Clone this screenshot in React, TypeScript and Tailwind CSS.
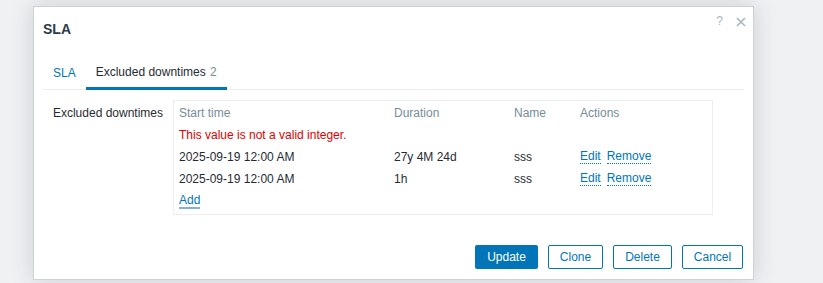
const rows = [
  { start: "2025-09-19 12:00 AM", duration: "27y 4M 24d", name: "sss" },
  { start: "2025-09-19 12:00 AM", duration: "1h", name: "sss" },
];

function LinkBtn({ children }: { children: React.ReactNode }) {
  return (
    <span className="text-[#0275b8] border-b border-dotted border-[#0275b8] leading-[13px] cursor-pointer">
      {children}
    </span>
  );
}

export default function App() {
  return (
    <div
      className="w-[823px] h-[283px] bg-[#f0f1f3] pt-[6px] pl-[33px] overflow-hidden text-[12px] text-[#1f2c33]"
      style={{ fontFamily: '"Liberation Sans", Arial, sans-serif' }}
    >
      <div className="w-[721px] h-[274px] bg-white border border-[#ccd3d7] shadow-[0_0_22px_rgba(40,50,60,0.18)] flex flex-col">
        {/* header */}
        <div className="flex items-start justify-between pl-[9px] pr-[7px] pt-[7px] h-[48px]">
          <h1 className="text-[14px] font-bold text-[#2d3c47] mt-[5px]">SLA</h1>
          <div className="flex items-center gap-[13px] text-[#a9b6bd] pt-[1px]">
            <span className="text-[12px] leading-none">?</span>
            <svg width="10" height="10" viewBox="0 0 10 10" className="mt-[1px]">
              <path d="M1 1 L9 9 M9 1 L1 9" stroke="#a9b6bd" strokeWidth="1.6" />
            </svg>
          </div>
        </div>

        {/* tabs */}
        <div className="mx-[9px] border-b border-[#ebeef0] flex h-[35px] items-end">
          <div className="px-[10px] pb-[7px] text-[#0275b8] text-[12px]">SLA</div>
          <div className="px-[10px] pb-[6px] border-b-[3px] border-[#0275b8] mb-[-1px] text-[12px]">
            Excluded downtimes <span className="text-[#768d99] ml-[1px]">2</span>
          </div>
        </div>

        {/* form */}
        <div className="flex pt-[10px] pl-[9px]">
          <div className="w-[130px] text-right pr-[10px] pt-[4px]">Excluded downtimes</div>
          <div className="w-[540px] h-[115px] border border-[#ebeef0] px-[5px] pt-[3px]">
            <div className="grid grid-cols-[215px_120px_66px_1fr] h-[18px] items-center text-[#768d99]">
              <span>Start time</span>
              <span>Duration</span>
              <span>Name</span>
              <span>Actions</span>
            </div>
            <div className="h-[24px] flex items-center text-[#e00000] pt-[1px]">
              This value is not a valid integer.
            </div>
            {rows.map((r, i) => (
              <div key={i} className="grid grid-cols-[215px_120px_66px_1fr] h-[22px] items-center">
                <span>{r.start}</span>
                <span>{r.duration}</span>
                <span>{r.name}</span>
                <span className="flex gap-[6px]">
                  <LinkBtn>Edit</LinkBtn>
                  <LinkBtn>Remove</LinkBtn>
                </span>
              </div>
            ))}
            <div className="h-[22px] flex items-center">
              <span className="text-[#0275b8] border-b-2 border-[#7fb2d6] leading-[13px]">Add</span>
            </div>
          </div>
        </div>

        {/* footer */}
        <div className="mt-auto flex justify-end gap-[10px] pr-[10px] pb-[10px]">
          <button className="h-[24px] w-[63px] bg-[#0275b8] text-white rounded-[2px]">Update</button>
          <button className="h-[24px] w-[55px] border border-[#0275b8] text-[#0275b8] rounded-[2px]">Clone</button>
          <button className="h-[24px] w-[59px] border border-[#0275b8] text-[#0275b8] rounded-[2px]">Delete</button>
          <button className="h-[24px] w-[61px] border border-[#0275b8] text-[#0275b8] rounded-[2px]">Cancel</button>
        </div>
      </div>
    </div>
  );
}
